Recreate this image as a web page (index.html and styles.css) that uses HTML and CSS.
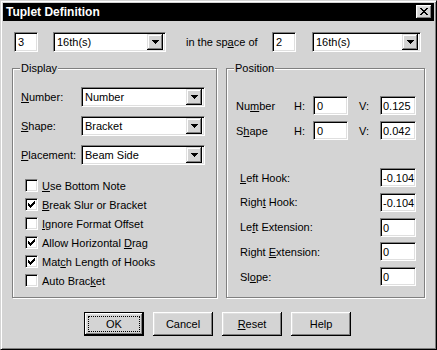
FILE: index.html
```html
<!DOCTYPE html>
<html>
<head>
<meta charset="utf-8">
<link rel="stylesheet" href="styles.css">
</head>
<body>
<div class="window">
  <div class="titlebar">
    <span class="title">Tuplet Definition</span>
    <span class="close"><svg width="8" height="7" viewBox="0 0 8 7"><path d="M0 0h2v1h-2zM6 0h2v1h-2zM1 1h2v1h-2zM5 1h2v1h-2zM2 2h4v1h-4zM3 3h2v1h-2zM2 4h4v1h-4zM1 5h2v1h-2zM5 5h2v1h-2zM0 6h2v1h-2zM6 6h2v1h-2z" fill="#000"/></svg></span>
  </div>
  <div class="content">
    <div class="toprow">
      <div class="field small">3</div>
      <div class="combo combo-a"><span class="val">16th(s)</span><span class="drop"><svg width="7" height="4" viewBox="0 0 7 4"><path d="M0 0h7v1h-1v1h-1v1h-1v1h-1v-1h-1v-1h-1v-1h-1z" fill="#000"/></svg></span></div>
      <span class="space-label">in the sp<u>a</u>ce of</span>
      <div class="field small">2</div>
      <div class="combo combo-b"><span class="val">16th(s)</span><span class="drop"><svg width="7" height="4" viewBox="0 0 7 4"><path d="M0 0h7v1h-1v1h-1v1h-1v1h-1v-1h-1v-1h-1v-1h-1z" fill="#000"/></svg></span></div>
    </div>

    <div class="groups">
      <div class="group display">
        <span class="legend">Display</span>
        <div class="drows">
          <div class="drow"><span class="dlabel"><u>N</u>umber:</span><div class="combo dcombo"><span class="val">Number</span><span class="drop"><svg width="7" height="4" viewBox="0 0 7 4"><path d="M0 0h7v1h-1v1h-1v1h-1v1h-1v-1h-1v-1h-1v-1h-1z" fill="#000"/></svg></span></div></div>
          <div class="drow"><span class="dlabel"><u>S</u>hape:</span><div class="combo dcombo"><span class="val">Bracket</span><span class="drop"><svg width="7" height="4" viewBox="0 0 7 4"><path d="M0 0h7v1h-1v1h-1v1h-1v1h-1v-1h-1v-1h-1v-1h-1z" fill="#000"/></svg></span></div></div>
          <div class="drow"><span class="dlabel"><u>P</u>lacement:</span><div class="combo dcombo"><span class="val">Beam Side</span><span class="drop"><svg width="7" height="4" viewBox="0 0 7 4"><path d="M0 0h7v1h-1v1h-1v1h-1v1h-1v-1h-1v-1h-1v-1h-1z" fill="#000"/></svg></span></div></div>
        </div>
        <div class="checks">
          <div class="check"><span class="box"></span><span><u>U</u>se Bottom Note</span></div>
          <div class="check"><span class="box"><svg width="7" height="7" viewBox="0 0 7 7"><path d="M0 2v3h1v1h1v1h1v-1h1v-1h1v-1h1v-1h1v-3h-1v1h-1v1h-1v1h-1v1h-1v-1h-1v-1h-1z" fill="#000"/></svg></span><span><u>B</u>reak Slur or Bracket</span></div>
          <div class="check"><span class="box"></span><span><u>I</u>gnore Format Offset</span></div>
          <div class="check"><span class="box"><svg width="7" height="7" viewBox="0 0 7 7"><path d="M0 2v3h1v1h1v1h1v-1h1v-1h1v-1h1v-1h1v-3h-1v1h-1v1h-1v1h-1v1h-1v-1h-1v-1h-1z" fill="#000"/></svg></span><span>Allow Horizontal <u>D</u>rag</span></div>
          <div class="check"><span class="box"><svg width="7" height="7" viewBox="0 0 7 7"><path d="M0 2v3h1v1h1v1h1v-1h1v-1h1v-1h1v-1h1v-3h-1v1h-1v1h-1v1h-1v1h-1v-1h-1v-1h-1z" fill="#000"/></svg></span><span>Mat<u>c</u>h Length of Hooks</span></div>
          <div class="check"><span class="box"></span><span>Auto Brac<u>k</u>et</span></div>
        </div>
      </div>

      <div class="group position">
        <span class="legend">Position</span>
        <div class="prows">
          <div class="prow"><span class="plabel">Nu<u>m</u>ber</span><span class="hlabel">H:</span><div class="field hfield">0</div><span class="vlabel">V:</span><div class="field vfield">0.125</div></div>
          <div class="prow"><span class="plabel">S<u>h</u>ape</span><span class="hlabel">H:</span><div class="field hfield">0</div><span class="vlabel">V:</span><div class="field vfield">0.042</div></div>
        </div>
        <div class="hooks">
          <div class="hrow"><span class="hklabel"><u>L</u>eft Hook:</span><div class="field vfield">-0.104</div></div>
          <div class="hrow"><span class="hklabel">Righ<u>t</u> Hook:</span><div class="field vfield">-0.104</div></div>
          <div class="hrow"><span class="hklabel">Le<u>f</u>t Extension:</span><div class="field vfield">0</div></div>
          <div class="hrow"><span class="hklabel">Right <u>E</u>xtension:</span><div class="field vfield">0</div></div>
          <div class="hrow"><span class="hklabel">Sl<u>o</u>pe:</span><div class="field vfield">0</div></div>
        </div>
      </div>
    </div>

    <div class="buttons">
      <div class="btn default"><span class="focus">OK</span></div>
      <div class="btn">Cancel</div>
      <div class="btn"><u>R</u>eset</div>
      <div class="btn">Help</div>
    </div>
  </div>
</div>
</body>
</html>
```

FILE: styles.css
```css
* { box-sizing: border-box; }
html, body { margin: 0; padding: 0; background: #d4d4d4; }
body {
  font-family: "Liberation Sans", Arial, sans-serif;
  font-size: 11px;
  color: #000;
}
u { text-decoration: underline; text-underline-offset: 1px; }

.window {
  width: 437px;
  height: 350px;
  background: #d4d4d4;
  border: 1px solid;
  border-color: #d4d4d4 #000 #000 #d4d4d4;
  box-shadow: inset 1px 1px 0 #fff, inset -1px -1px 0 #808080;
  padding: 2px;
  display: flex;
  flex-direction: column;
}

.titlebar {
  height: 18px;
  background: #000;
  display: flex;
  align-items: flex-start;
  justify-content: space-between;
  padding-left: 3px;
  flex: none;
}
.title {
  color: #fff;
  font-weight: bold;
  font-size: 12px;
  line-height: 18px;
}
.close {
  width: 16px;
  height: 14px;
  margin: 2px 2px 0 0;
  background: #d4d4d4;
  box-shadow: inset -1px -1px 0 #000, inset 1px 1px 0 #fff, inset -2px -2px 0 #808080, inset 2px 2px 0 #dfdfdf;
  display: flex;
  align-items: center;
  justify-content: center;
  padding: 0 0 1px 0;
}
.close svg { display: block; }

.content {
  padding: 0 9px;
  flex: 1;
  display: flex;
  flex-direction: column;
}

/* sunken fields */
.field, .combo {
  background: #fff;
  border: 1px solid;
  border-color: #808080 #fff #fff #808080;
  box-shadow: inset 1px 1px 0 #000, inset -1px -1px 0 #dfdfdf;
  height: 20px;
  line-height: 16px;
  padding: 1px 2px 1px 3px;
  white-space: nowrap;
}
.combo {
  display: flex;
  align-items: center;
  justify-content: space-between;
  padding: 2px 2px 2px 3px;
}
.combo .val { line-height: 16px; }
.drop {
  width: 16px;
  height: 16px;
  background: #d4d4d4;
  box-shadow: inset -1px -1px 0 #000, inset 1px 1px 0 #dfdfdf, inset -2px -2px 0 #808080, inset 2px 2px 0 #fff;
  display: flex;
  align-items: center;
  justify-content: center;
  padding-bottom: 1px;
}
.drop svg { display: block; }

.toprow {
  margin-top: 11px;
  margin-left: 2px;
  display: flex;
  align-items: center;
  height: 20px;
}
.small { width: 24px; }
.combo-a { width: 113px; margin-left: 15px; }
.space-label { width: 86px; margin-left: 20px; }
.combo-b { width: 109px; margin-left: 16px; }

.groups {
  margin-top: 16px;
  display: flex;
  gap: 9px;
}
.group {
  height: 230px;
  border: 1px solid #808080;
  box-shadow: inset 1px 1px 0 #fff, 1px 1px 0 #fff;
  display: flex;
  flex-direction: column;
  align-items: flex-start;
}
.legend {
  background: #d4d4d4;
  line-height: 13px;
  margin: -7px 0 -6px -1px;
  padding: 0 1px;
}
.display { width: 205px; padding: 0 0 0 8px; }
.position { width: 199px; padding: 0 8px 0 9px; }
.position .legend { margin-left: -2px; }

.drows {
  margin-top: 18px;
  display: flex;
  flex-direction: column;
  gap: 9px;
}
.drow { display: flex; align-items: center; height: 20px; }
.dlabel { width: 60px; }
.dcombo { width: 124px; }

.checks {
  margin-top: 11px;
  display: flex;
  flex-direction: column;
}
.check {
  height: 19px;
  display: flex;
  align-items: center;
  padding-left: 4px;
}
.box {
  width: 13px;
  height: 13px;
  margin-right: 4px;
  background: #fff;
  border: 1px solid;
  border-color: #808080 #fff #fff #808080;
  box-shadow: inset 1px 1px 0 #000, inset -1px -1px 0 #dfdfdf;
  padding: 2px;
  flex: none;
}
.box svg { display: block; }

.prows {
  margin-top: 27px;
  display: flex;
  flex-direction: column;
  gap: 6px;
}
.prow { display: flex; align-items: center; height: 19px; }
.plabel { width: 58px; }
.hlabel { width: 19px; }
.hfield { width: 35px; height: 19px; }
.vlabel { width: 21px; margin-left: 11px; }
.vfield { width: 36px; height: 19px; padding-left: 2px; }

.hooks {
  margin-top: 28px;
  display: flex;
  flex-direction: column;
  gap: 5.75px;
  align-self: stretch;
}
.hrow {
  height: 19px;
  display: flex;
  align-items: center;
  justify-content: space-between;
  padding-left: 4px;
}

.buttons {
  margin-top: 14px;
  margin-left: 72px;
  display: flex;
  gap: 9px;
}
.btn {
  width: 60px;
  height: 24px;
  background: #d4d4d4;
  box-shadow: inset -1px -1px 0 #000, inset 1px 1px 0 #fff, inset -2px -2px 0 #808080, inset 2px 2px 0 #dfdfdf;
  display: flex;
  align-items: center;
  justify-content: center;
  line-height: 13px;
}
.btn.default {
  border: 1px solid #000;
  padding: 3px;
}
.focus {
  flex: 1;
  align-self: stretch;
  border: 1px dotted #000;
  display: flex;
  align-items: center;
  justify-content: center;
}
```
